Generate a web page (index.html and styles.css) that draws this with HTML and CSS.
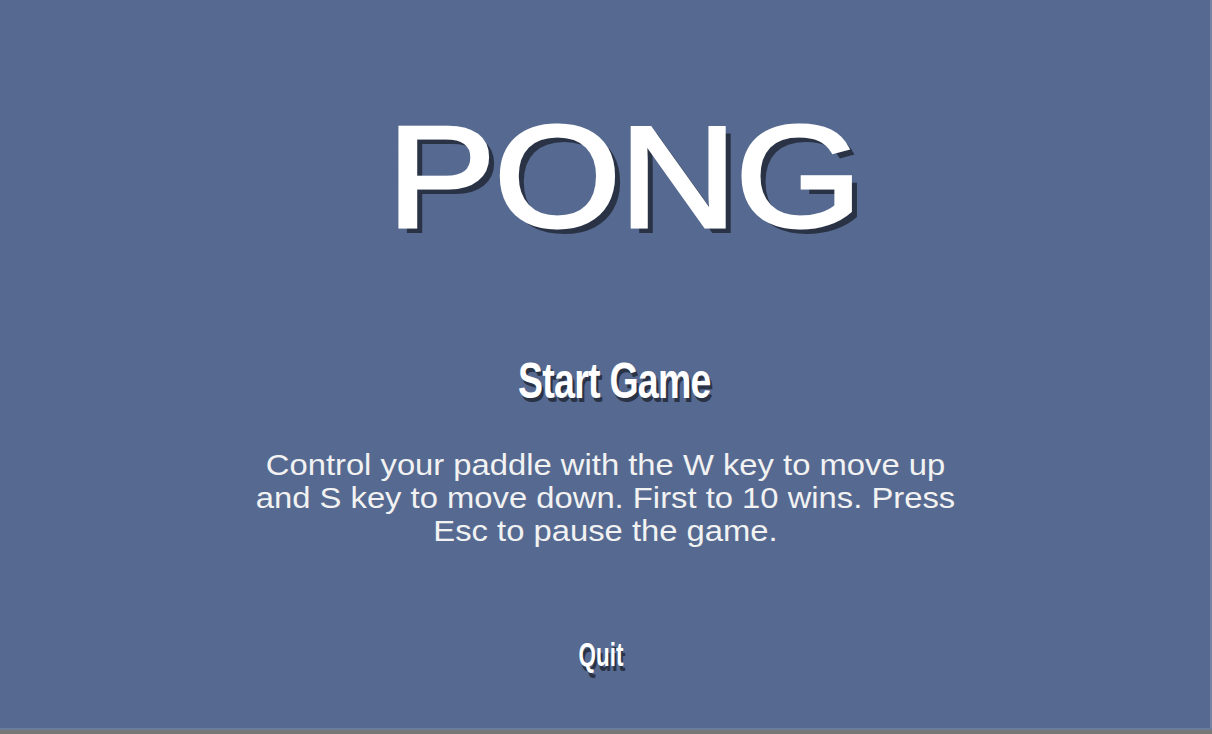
FILE: index.html
```html
<!DOCTYPE html>
<html>
<head>
<meta charset="utf-8">
<link rel="stylesheet" href="styles.css">
</head>
<body>
<div class="frame">
  <main class="screen">
    <h1 class="title">PONG</h1>
    <div class="start">Start Game</div>
    <p class="info">Control your paddle with the W key to move up<br>and S key to move down. First to 10 wins. Press<br>Esc to pause the game.</p>
    <div class="quit">Quit</div>
  </main>
  <div class="edge"></div>
  <div class="bar"></div>
</div>
</body>
</html>
```

FILE: styles.css
```css
html, body {
  margin: 0;
  padding: 0;
  width: 1212px;
  height: 734px;
  overflow: hidden;
  background: #787878;
  font-family: "Liberation Sans", Arial, sans-serif;
}
.frame {
  display: flex;
  flex-direction: column;
  width: 1212px;
  height: 734px;
}
.screen {
  height: 728px;
  box-sizing: border-box;
  background: #566a91;
  border-right: 2px solid #7686a4;
  display: flex;
  flex-direction: column;
  align-items: center;
  color: #ffffff;
}
.edge {
  height: 2px;
  background: #6c7c9c;
}
.bar {
  flex: 1;
  background: #777777;
}
.title {
  margin: 92px 0 0 36px;
  font-size: 145px;
  line-height: 170px;
  font-weight: normal;
  letter-spacing: -2px;
  -webkit-text-stroke: 3px #ffffff;
  text-shadow: 6px 6px 0 #2a3346;
  transform: scaleX(1.13);
}
.start {
  margin: 89px 0 0 18px;
  font-size: 50px;
  line-height: 60px;
  font-weight: bold;
  letter-spacing: -1px;
  transform: scaleX(0.75);
  text-shadow: 3px 4px 0 #2a3346;
}
.info {
  margin: 38px 0 0 0;
  white-space: nowrap;
  text-align: center;
  font-size: 29px;
  line-height: 33px;
  color: #f2f2f2;
  transform: scaleX(1.13);
}
.quit {
  margin-top: 87px;
  margin-right: 8px;
  font-size: 33px;
  line-height: 40px;
  font-weight: bold;
  transform: scaleX(0.68);
  text-shadow: 3px 5px 0 #2a3346;
}
```
